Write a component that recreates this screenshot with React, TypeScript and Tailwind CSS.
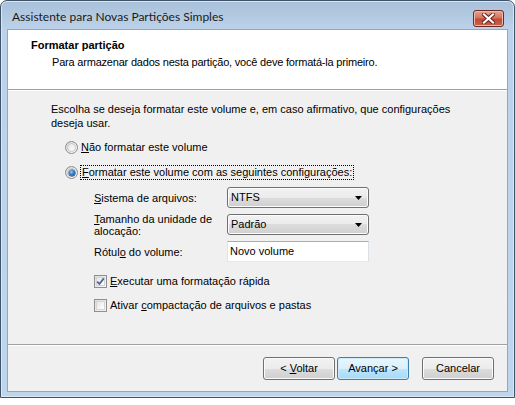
import type { ReactNode } from 'react';

const FONT = "font-['Liberation_Sans',Arial,sans-serif]";

function Radio({ checked }: { checked?: boolean }) {
  return (
    <span className="relative flex h-[13px] w-[13px] shrink-0 items-center justify-center rounded-full border border-[#8c8c8c] bg-[linear-gradient(135deg,#d6d6d6,#fbfbfb)]">
      <span className="h-[9px] w-[9px] rounded-full border border-[#c8c8c8] bg-[linear-gradient(135deg,#e4e4e4,#ffffff)]" />
      {checked && (
        <span className="absolute left-[2.5px] top-[2.5px] h-[6px] w-[6px] rounded-full bg-[radial-gradient(circle_at_40%_35%,#9fd2f6_0%,#2d7ac7_45%,#12449a_100%)] shadow-[0_0_0_0.5px_#1b3f74]" />
      )}
    </span>
  );
}

function Checkbox({ checked }: { checked?: boolean }) {
  return (
    <span className="flex h-[13px] w-[13px] shrink-0 items-center justify-center border border-[#8e8f8f] bg-[linear-gradient(135deg,#dcdcdc,#f7f7f7)]">
      <span className="flex h-[9px] w-[9px] items-center justify-center border border-[#d5d5d5] bg-[linear-gradient(135deg,#e6e6e6,#ffffff)]">
        {checked && (
          <svg width="9" height="9" viewBox="0 0 9 9" className="overflow-visible">
            <path d="M1.2 4.6 L3.4 7 L7.8 1.4" fill="none" stroke="#4a5f97" strokeWidth="1.7" />
          </svg>
        )}
      </span>
    </span>
  );
}

function Select({ value }: { value: string }) {
  return (
    <div className="flex h-[21px] w-[142px] items-center justify-between rounded-[3px] border border-[#707070] bg-[linear-gradient(180deg,#f2f2f2_0%,#ebebeb_50%,#dddddd_50%,#cfcfcf_100%)] pl-[3px] pr-[6px] shadow-[inset_0_0_0_1px_#fcfcfc]">
      <span>{value}</span>
      <svg width="7" height="4" viewBox="0 0 7 4">
        <path d="M0 0 H7 L3.5 4 Z" fill="#000" />
      </svg>
    </div>
  );
}

function Button({ children, primary }: { children: ReactNode; primary?: boolean }) {
  return (
    <div
      className={`flex h-[23px] w-[72px] items-center justify-center rounded-[3px] border ${
        primary
          ? 'border-[#3c7fb1] bg-[linear-gradient(180deg,#eaf6fd_0%,#d9f0fc_50%,#bee6fd_50%,#a7d9f5_100%)] shadow-[inset_0_0_0_1px_#cdeaf9]'
          : 'border-[#707070] bg-[linear-gradient(180deg,#f2f2f2_0%,#ebebeb_50%,#dddddd_50%,#cfcfcf_100%)] shadow-[inset_0_0_0_1px_#fbfbfb]'
      }`}
    >
      <span className="whitespace-pre">{children}</span>
    </div>
  );
}

function Row({ label, children }: { label: ReactNode; children: ReactNode }) {
  return (
    <div className="flex h-[21px] items-center">
      <div className="w-[133px] leading-[12px]">{label}</div>
      {children}
    </div>
  );
}

export default function App() {
  return (
    <div className={`h-[405px] w-[515px] bg-white ${FONT} text-[11px] text-black`}>
      <div className="flex h-[398px] w-[515px] flex-col rounded-t-[7px] border border-[#3f5369] bg-[linear-gradient(180deg,#a9c0da_0px,#bcd2ea_28px,#bdd5ed_100%)] shadow-[inset_0_0_0_1px_#dbe7f4]">
        {/* title bar */}
        <div className="flex h-[29px] shrink-0 items-start justify-between">
          <span className="ml-[11px] mt-[8px] font-['Lato',sans-serif] text-[12px] leading-[16px] text-[#1a1a1a]">
            Assistente para Novas Partições Simples
          </span>
          <div className="mr-[10px] mt-[9px] flex h-[17px] w-[31px] items-center justify-center rounded-[3px] border border-[#6d2a22] bg-[linear-gradient(180deg,#e8a493_0%,#d2735f_45%,#c24a33_55%,#c9634a_100%)] shadow-[inset_0_0_0_1px_#f0b8a8]">
            <svg width="13" height="11" viewBox="0 0 13 11">
              <path d="M2 1.5 L11 9.5 M11 1.5 L2 9.5" stroke="#5c2118" strokeWidth="4" strokeLinecap="square" />
              <path d="M2 1.5 L11 9.5 M11 1.5 L2 9.5" stroke="#fff" strokeWidth="2.2" strokeLinecap="square" />
            </svg>
          </div>
        </div>

        {/* client area */}
        <div className="mx-[7px] mb-[6px] flex flex-1 flex-col bg-[#f0f0f0] outline outline-1 outline-[#8fa8c6]">
          {/* header */}
          <div className="h-[59px] shrink-0 bg-white pl-[23px] pt-[9px] leading-[13px]">
            <div className="text-[11px] font-bold">Formatar partição</div>
            <div className="ml-[21px] mt-[4px] tracking-[-0.2px]">
              Para armazenar dados nesta partição, você deve formatá-la primeiro.
            </div>
          </div>
          <div className="h-px bg-[#a0a0a0]" />
          <div className="h-px bg-white" />

          {/* body */}
          <div className="flex flex-1 flex-col pl-[43px] leading-[13px]">
            <p className="mt-[11px] w-[400px] leading-[14px]">
              Escolha se deseja formatar este volume e, em caso afirmativo, que configurações deseja usar.
            </p>

            <div className="ml-[14px] mt-[11px] flex items-center gap-[3px]">
              <Radio />
              <span>
                <u>N</u>ão formatar este volume
              </span>
            </div>

            <div className="ml-[14px] mt-[11px] flex items-center gap-[2px]">
              <Radio checked />
              <span className="border border-dotted border-black px-px">
                <u>F</u>ormatar este volume com as seguintes configurações:
              </span>
            </div>

            <div className="ml-[43px] mt-[7px] flex flex-col gap-[6px]">
              <Row
                label={
                  <>
                    <u>S</u>istema de arquivos:
                  </>
                }
              >
                <Select value="NTFS" />
              </Row>
              <Row
                label={
                  <>
                    <u>T</u>amanho da unidade de
                    <br />
                    alocação:
                  </>
                }
              >
                <Select value="Padrão" />
              </Row>
              <Row
                label={
                  <>
                    Rótul<u>o</u> do volume:
                  </>
                }
              >
                <div className="flex h-[21px] w-[142px] items-center border border-[#abadb3] border-l-[#e2e3ea] border-r-[#dbdfe6] border-b-[#e3e9ef] bg-white pl-[2px]">
                  Novo volume
                </div>
              </Row>

              <div className="mt-[7px] flex items-center gap-[3px]">
                <Checkbox checked />
                <span>
                  <u>E</u>xecutar uma formatação rápida
                </span>
              </div>
              <div className="mt-[5px] flex items-center gap-[3px]">
                <Checkbox />
                <span>
                  Ativar <u>c</u>ompactação de arquivos e pastas
                </span>
              </div>
            </div>
          </div>

          {/* footer */}
          <div className="h-px bg-[#a0a0a0]" />
          <div className="h-px bg-white" />
          <div className="flex h-[45px] shrink-0 items-start justify-end pr-[13px] pt-[11px]">
            <Button>
              {'< '}
              <u>V</u>oltar
            </Button>
            <div className="ml-[2px]">
              <Button primary>Avançar &gt;</Button>
            </div>
            <div className="ml-[13px]">
              <Button>Cancelar</Button>
            </div>
          </div>
        </div>
      </div>
    </div>
  );
}
